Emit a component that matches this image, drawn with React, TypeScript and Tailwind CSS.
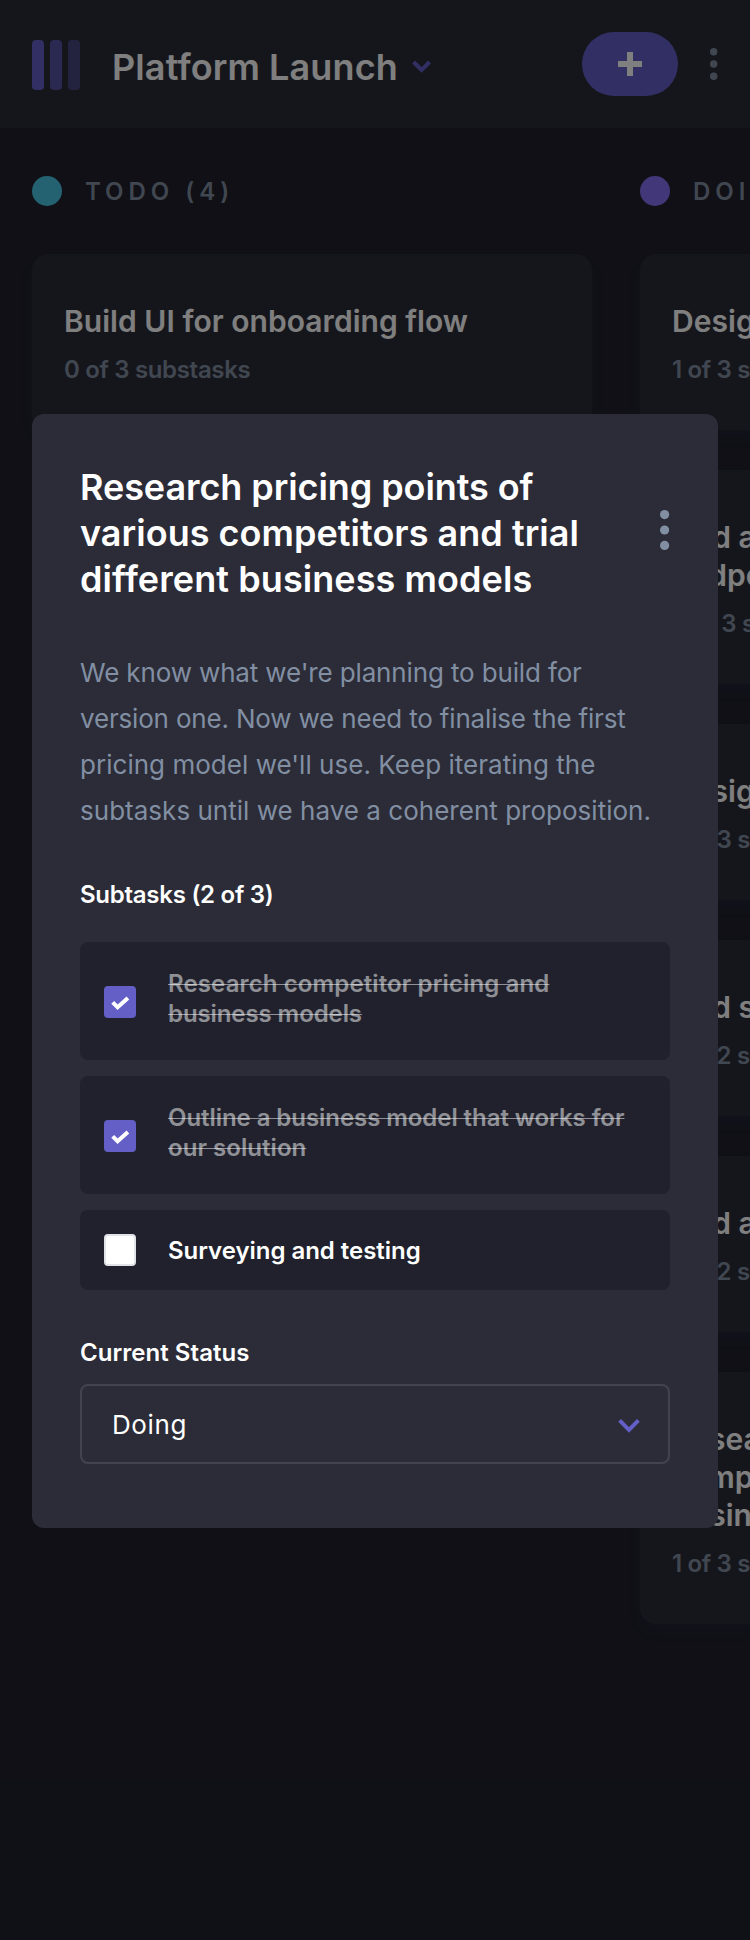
import React from "react";

type Task = { title: string[]; done: number; total: number };

const todoTasks: Task[] = [{ title: ["Build UI for onboarding flow"], done: 0, total: 3 }];

const doingTasks: Task[] = [
  { title: ["Design settings and search pages"], done: 1, total: 3 },
  { title: ["Add account management", "endpoints"], done: 2, total: 3 },
  { title: ["Design onboarding flow"], done: 1, total: 3 },
  { title: ["Add search endpoints"], done: 1, total: 2 },
  { title: ["Add authentication endpoints"], done: 1, total: 2 },
  {
    title: ["Research pricing points of various", "competitors and trial different", "business models"],
    done: 1,
    total: 3,
  },
];

const subtasks = [
  {
    lines: [
      { text: "Research competitor pricing and", tracking: "tracking-[0.12px]" },
      { text: "business models", tracking: "tracking-[-0.09px]" },
    ],
    done: true,
  },
  {
    lines: [
      { text: "Outline a business model that works for", tracking: "tracking-[-0.06px]" },
      { text: "our solution", tracking: "tracking-[0.05px]" },
    ],
    done: true,
  },
  { lines: [{ text: "Surveying and testing", tracking: "tracking-[-0.03px]" }], done: false },
];

function Logo() {
  return (
    <svg width="48" height="50" viewBox="0 0 48 50" fill="#635fc7" className="block shrink-0">
      <rect width="12" height="50" rx="4" />
      <rect x="18" width="12" height="50" rx="4" opacity="0.75" />
      <rect x="36" width="12" height="50" rx="4" opacity="0.5" />
    </svg>
  );
}

function Header() {
  return (
    <header className="flex h-32 items-center bg-[#2b2c37] pl-8">
      <div className="pt-0.5">
        <Logo />
      </div>
      <h1 className="ml-8 w-[285px] pt-1.5 text-[36px] leading-[46px] font-semibold tracking-[0.11px] whitespace-nowrap text-white">
        Platform Launch
      </h1>
      <svg width="20" height="14" viewBox="0 0 20 14" fill="none" className="ml-[14px] mt-1.5 block">
        <path d="M2.6 2 10.6 10 18.6 2" stroke="#635fc7" strokeWidth="4" />
      </svg>
      <button className="ml-auto flex h-16 w-24 items-center justify-center rounded-full bg-[#635fc7]">
        <svg width="24" height="24" viewBox="0 0 24 24" fill="#fff" className="block">
          <path d="M9 0h6v9h9v6h-9v9H9v-9H0V9h9z" />
        </svg>
      </button>
      <svg width="8" height="34" viewBox="0 0 8 34" fill="#828fa3" className="mr-8 ml-8 block">
        <circle cx="3.7" cy="4.7" r="3.7" />
        <circle cx="3.7" cy="17" r="3.7" />
        <circle cx="3.7" cy="29.3" r="3.7" />
      </svg>
    </header>
  );
}

function Card({ task }: { task: Task }) {
  return (
    <article className="flex flex-col gap-[15px] rounded-2xl bg-[#2b2c37] px-8 pt-12 pb-[45px] shadow-[0_8px_12px_rgba(54,78,126,0.1)]">
      <h3 className="text-[30px] leading-[38px] font-semibold tracking-[0.04px] whitespace-nowrap text-white">
        {task.title.map((line) => (
          <span key={line} className="block">
            {line}
          </span>
        ))}
      </h3>
      <p className="text-2xl leading-[30px] font-semibold tracking-[-0.33px] whitespace-nowrap text-[#828fa3]">
        {task.done} of {task.total} substasks
      </p>
    </article>
  );
}

function Column({ name, dot, tasks }: { name: string; dot: string; tasks: Task[] }) {
  return (
    <section className="w-[560px] shrink-0">
      <div className="flex h-[30px] items-center gap-[23px]">
        <span className={`size-[30px] rounded-full ${dot}`} />
        <h2 className="pt-0.5 text-2xl leading-[30px] font-semibold tracking-[5px] whitespace-nowrap text-[#828fa3]">
          {name}
        </h2>
      </div>
      <div className="mt-12 flex flex-col gap-10">
        {tasks.map((task) => (
          <Card key={task.title[0]} task={task} />
        ))}
      </div>
    </section>
  );
}

function Checkbox({ checked }: { checked: boolean }) {
  if (!checked) {
    return <span className="size-8 shrink-0 rounded border-2 border-[#e0e3e8] bg-white" />;
  }
  return (
    <span className="size-8 shrink-0 rounded bg-[#635fc7]">
      <svg width="32" height="32" viewBox="0 0 32 32" fill="none" className="block">
        <path d="M8.7 16.3 13.6 21.2 23.9 12" stroke="#fff" strokeWidth="4" />
      </svg>
    </span>
  );
}

function TaskDialog() {
  return (
    <div className="rounded-xl bg-[#2b2c37] px-12 pt-[50px] pb-16">
      <div className="flex items-center justify-between">
        <h2 className="text-[36px] leading-[46px] font-semibold whitespace-nowrap text-white">
          <span className="block tracking-[-0.08px]">Research pricing points of</span>
          <span className="block tracking-[0.03px]">various competitors and trial</span>
          <span className="block tracking-[0.08px]">different business models</span>
        </h2>
        <svg width="10" height="40" viewBox="0 0 10 40" fill="#828fa3" className="-mt-[6px] block">
          <circle cx="4.6" cy="4.6" r="4.6" />
          <circle cx="4.6" cy="20" r="4.6" />
          <circle cx="4.6" cy="35.4" r="4.6" />
        </svg>
      </div>

      <p className="mt-12 text-[26px] leading-[46px] whitespace-nowrap text-[#828fa3]">
        <span className="block tracking-[-0.14px]">We know what we're planning to build for</span>
        <span className="block tracking-[-0.18px]">version one. Now we need to finalise the first</span>
        <span className="block tracking-[0.03px]">pricing model we'll use. Keep iterating the</span>
        <span className="block tracking-[0.02px]">subtasks until we have a coherent proposition.</span>
      </p>

      <h3 className="mt-[46px] text-2xl leading-[30px] font-semibold tracking-[-0.26px] text-white">Subtasks (2 of 3)</h3>
      <ul className="mt-8 flex flex-col gap-4">
        {subtasks.map((task) => (
          <li
            key={task.lines[0].text}
            className={`flex items-center gap-8 rounded-lg bg-[#20212c] px-6 ${task.done ? "h-[118px] pt-0.5" : "h-20"}`}
          >
            <Checkbox checked={task.done} />
            <p
              className={`text-2xl leading-[30px] font-semibold whitespace-nowrap ${
                task.done ? "-mt-1.5 text-white/50 line-through decoration-1" : "mt-0.5 text-white"
              }`}
            >
              {task.lines.map((line) => (
                <span key={line.text} className={`block ${line.tracking}`}>
                  {line.text}
                </span>
              ))}
            </p>
          </li>
        ))}
      </ul>

      <h3 className="mt-12 text-2xl leading-[30px] font-semibold tracking-[0.04px] text-white">Current Status</h3>
      <button className="mt-4 flex h-20 w-full items-center justify-between rounded-lg border-2 border-[#414450] pr-7 pl-[30px] text-[26px] leading-[46px] text-white">
        <span className="pt-0.5 tracking-[0.6px]">Doing</span>
        <svg width="22" height="16" viewBox="0 0 22 16" fill="none" className="mt-1 block">
          <path d="M1.6 2.4 11 11.8 20.4 2.4" stroke="#635fc7" strokeWidth="4" />
        </svg>
      </button>
    </div>
  );
}

export default function App() {
  return (
    <div className="relative h-[1940px] w-[750px] overflow-hidden bg-[#20212c] font-[Inter,sans-serif]">
      <Header />
      <main className="flex gap-12 px-8 pt-12">
        <Column name="TODO (4)" dot="bg-[#49c4e5]" tasks={todoTasks} />
        <Column name="DOING (6)" dot="bg-[#8471f2]" tasks={doingTasks} />
      </main>
      <div className="absolute inset-0 flex flex-col justify-center bg-black/50 px-8 pt-0.5">
        <TaskDialog />
      </div>
    </div>
  );
}
